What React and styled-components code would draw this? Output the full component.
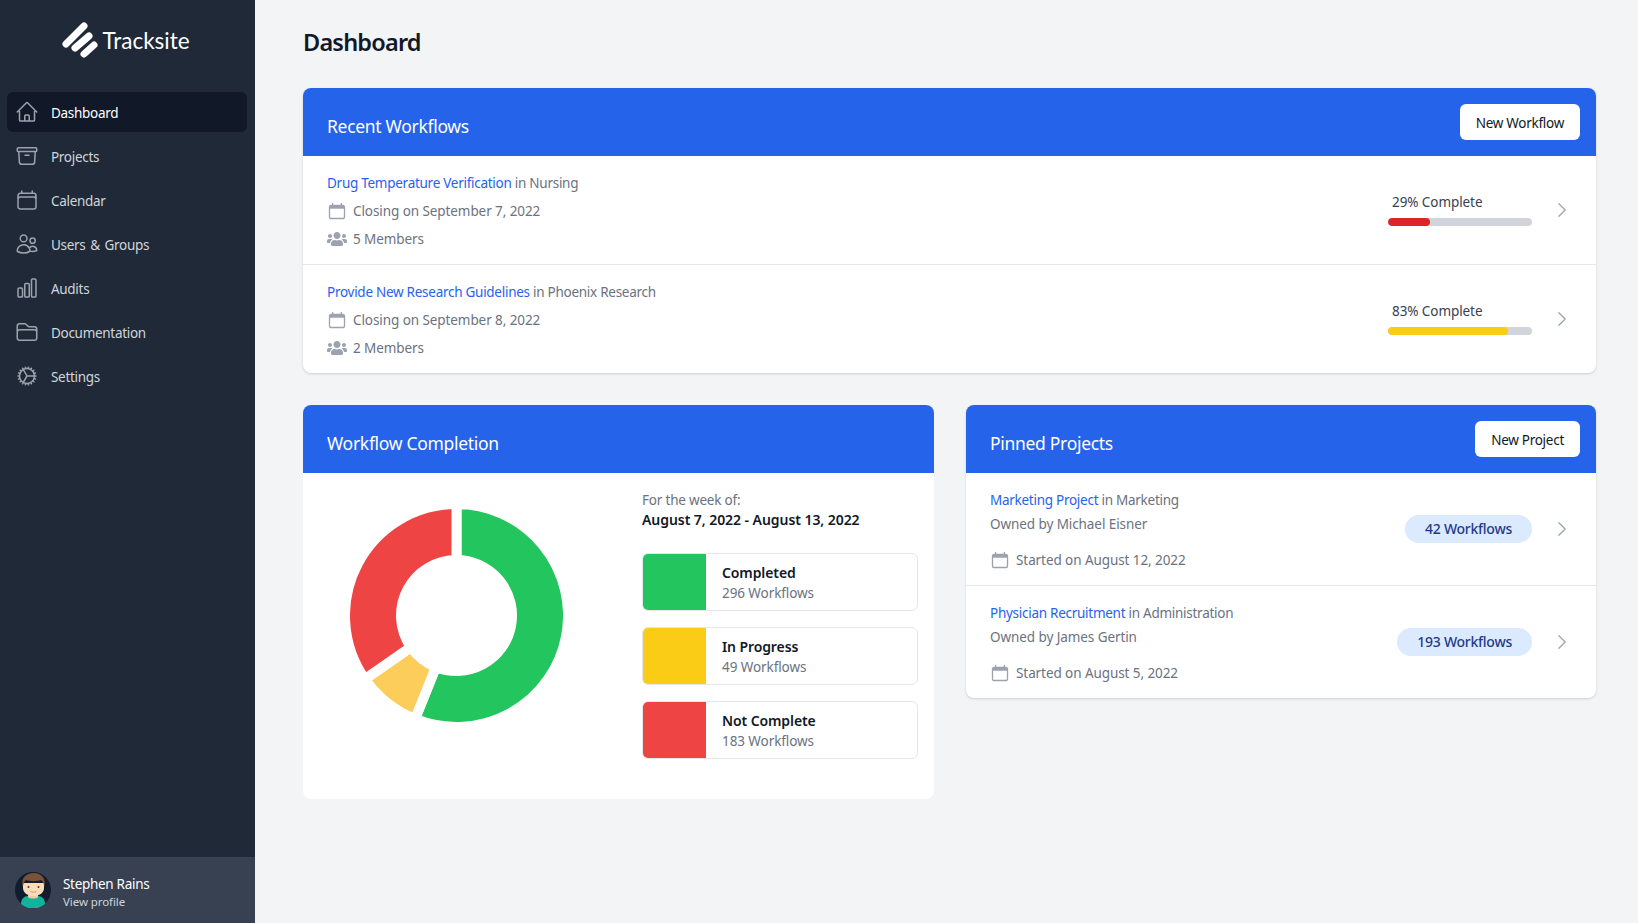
import React from 'react';
import styled, { createGlobalStyle } from 'styled-components';
import { FaUsers } from 'react-icons/fa';
import {
  HiOutlineHome,
  HiOutlineArchiveBox,
  HiOutlineCalendar,
  HiOutlineUsers,
  HiOutlineChartBar,
  HiOutlineFolder,
  HiOutlineCog,
  HiOutlineChevronRight,
} from 'react-icons/hi2';

const GlobalStyle = createGlobalStyle`
  html, body {
    margin: 0;
    height: 100%;
    background: #f3f4f6;
    font-family: "Noto Sans", "Open Sans", sans-serif;
    font-size: 13.5px;
    line-height: 20px;
    letter-spacing: -0.08px;
    color: #111827;
  }
  * { box-sizing: border-box; }
`;

const Shell = styled.div`
  display: flex;
  height: 100vh;
  overflow: hidden;
`;

const Sidebar = styled.aside`
  width: 255px;
  flex: none;
  display: flex;
  flex-direction: column;
  background: #1f2937;
`;

const Logo = styled.div`
  height: 80px;
  display: flex;
  align-items: center;
  justify-content: center;
  gap: 3px;
  color: #fff;
  padding-right: 4px;
`;

const LogoText = styled.span`
  font-family: "Lato", sans-serif;
  font-size: 22.5px;
  line-height: 30px;
  font-weight: 400;
  letter-spacing: 0;
  padding-top: 2px;
`;

const Nav = styled.nav`
  margin-top: 12px;
  padding: 0 8px 0 7px;
  display: flex;
  flex-direction: column;
  gap: 4px;
`;

const NavItem = styled.a`
  height: 40px;
  display: flex;
  align-items: center;
  gap: 12px;
  padding: 0 8px;
  border-radius: 6px;
  letter-spacing: -0.3px;
  word-spacing: 1.5px;
  background: ${(p) => (p.$active ? '#111827' : 'transparent')};
  color: ${(p) => (p.$active ? '#fff' : '#d1d5db')};
  svg {
    width: 24px;
    height: 24px;
    flex: none;
    color: #9ca3af;
  }
  span {
    padding-top: 2px;
  }
`;

const Profile = styled.div`
  margin-top: auto;
  height: 66px;
  background: #374151;
  display: flex;
  align-items: center;
  gap: 12px;
  padding: 0 15px;
`;

const ProfileText = styled.div`
  padding-top: 4px;
`;

const ProfileName = styled.div`
  color: #fff;
  letter-spacing: -0.3px;
`;

const ProfileLink = styled.div`
  color: #d1d5db;
  font-size: 11.5px;
  line-height: 16px;
`;

const Main = styled.main`
  flex: 1;
  min-width: 0;
  padding: 26px 42px 0 48px;
`;

const PageTitle = styled.h1`
  margin: 0 0 30px;
  font-size: 23.5px;
  line-height: 32px;
  font-weight: 600;
  letter-spacing: -0.8px;
  color: #111827;
`;

const Card = styled.section`
  background: #fff;
  border-radius: 8px;
  box-shadow: ${(p) => (p.$flat ? 'none' : '0 1px 3px rgba(0, 0, 0, 0.1), 0 1px 2px rgba(0, 0, 0, 0.06)')};
  overflow: hidden;
`;

const CardHeader = styled.header`
  height: 68px;
  background: #2563eb;
  display: flex;
  align-items: flex-end;
  justify-content: space-between;
  padding: 16px 16px 16px 24px;
`;

const CardTitle = styled.h2`
  margin: 0;
  font-size: 17.5px;
  line-height: 28px;
  font-weight: 400;
  letter-spacing: -0.3px;
  color: #fff;
`;

const HeaderButton = styled.button`
  height: 36px;
  padding: 2px 16px 0;
  border: 0;
  border-radius: 6px;
  background: #fff;
  font: inherit;
  letter-spacing: -0.27px;
  color: #111827;
`;

const Row = styled.div`
  display: flex;
  align-items: center;
  justify-content: space-between;
  padding: 17px 24px 15px;
  & + & {
    border-top: 1px solid #e5e7eb;
  }
`;

const RowInfo = styled.div`
  display: flex;
  flex-direction: column;
`;

const TitleLine = styled.div`
  color: #6b7280;
  letter-spacing: -0.27px;
  a {
    color: #2563eb;
  }
`;

const MetaLine = styled.div`
  display: flex;
  align-items: center;
  gap: 6px;
  margin-top: ${(p) => p.$top}px;
  color: #6b7280;
  > svg {
    width: 20px;
    height: 20px;
    flex: none;
    color: #9ca3af;
  }
`;

const RowSide = styled.div`
  display: flex;
  align-items: center;
  gap: 20px;
  margin-top: -2px;
`;

const Chevron = styled(HiOutlineChevronRight)`
  width: 20px;
  height: 20px;
  color: #9ca3af;
  flex: none;
`;

const Progress = styled.div`
  width: 144px;
  margin-top: -2px;
`;

const ProgressLabel = styled.div`
  padding-left: 4px;
  margin-bottom: 6px;
  color: #374151;
`;

const Track = styled.div`
  height: 8px;
  border-radius: 4px;
  background: #d1d5db;
  overflow: hidden;
`;

const Fill = styled.div`
  height: 100%;
  border-radius: 4px;
  background: ${(p) => p.$color};
`;

const Columns = styled.div`
  display: grid;
  grid-template-columns: 631px 630px;
  column-gap: 32px;
  margin-top: 32px;
  align-items: start;
`;

const CompletionBody = styled.div`
  height: 326px;
  display: flex;
  justify-content: space-between;
  padding: 17px 16px 0 47px;
`;

const Donut = styled.svg`
  width: 213px;
  height: 213px;
  margin-top: 19px;
  flex: none;
`;

const WeekLabel = styled.div`
  color: #6b7280;
  letter-spacing: -0.2px;
`;

const WeekRange = styled.div`
  font-size: 14px;
  font-weight: 600;
  color: #111827;
  letter-spacing: -0.06px;
`;

const Legend = styled.div`
  width: 276px;
`;

const LegendList = styled.div`
  margin-top: 23px;
  display: flex;
  flex-direction: column;
  gap: 16px;
`;

const LegendItem = styled.div`
  height: 58px;
  display: flex;
  border: 1px solid #e5e7eb;
  border-radius: 6px;
  overflow: hidden;
`;

const Swatch = styled.div`
  width: 64px;
  margin: -1px 0 -1px -1px;
  background: ${(p) => p.$color};
`;

const LegendText = styled.div`
  padding: 9px 16px;
  color: #6b7280;
  strong {
    display: block;
    font-size: 14px;
    font-weight: 600;
    letter-spacing: -0.1px;
    color: #111827;
  }
`;

const Pill = styled.span`
  height: 28px;
  display: inline-flex;
  align-items: center;
  padding: 0 20px;
  border-radius: 14px;
  background: #dbeafe;
  color: #1e3a8a;
  font-size: 14px;
  font-weight: 500;
  letter-spacing: -0.25px;
`;

const navItems = [
  { label: 'Dashboard', icon: HiOutlineHome, active: true },
  { label: 'Projects', icon: HiOutlineArchiveBox },
  { label: 'Calendar', icon: HiOutlineCalendar },
  { label: 'Users & Groups', icon: HiOutlineUsers },
  { label: 'Audits', icon: HiOutlineChartBar },
  { label: 'Documentation', icon: HiOutlineFolder },
  { label: 'Settings', icon: HiOutlineCog },
];

const workflows = [
  { name: 'Drug Temperature Verification', where: 'Nursing', closing: 'September 7, 2022', members: 5, pct: 29, color: '#dc2626' },
  { name: 'Provide New Research Guidelines', where: 'Phoenix Research', closing: 'September 8, 2022', members: 2, pct: 83, color: '#facc15' },
];

const projects = [
  { name: 'Marketing Project', where: 'Marketing', owner: 'Michael Eisner', started: 'August 12, 2022', count: 42 },
  { name: 'Physician Recruitment', where: 'Administration', owner: 'James Gertin', started: 'August 5, 2022', count: 193 },
];

const legend = [
  { label: 'Completed', count: 296, color: '#22c55e', slice: '#22c55e' },
  { label: 'In Progress', count: 49, color: '#facc15', slice: '#fccd5a' },
  { label: 'Not Complete', count: 183, color: '#ef4444', slice: '#ef4444' },
];

// doughnut slice, the white stroke makes the gaps so radii go a bit past the visible ring
function slicePath(from, to) {
  const R = 111.5;
  const r = 55.5;
  const pt = (rad, a) => {
    const t = (a * Math.PI) / 180;
    return `${(rad * Math.sin(t)).toFixed(2)} ${(-rad * Math.cos(t)).toFixed(2)}`;
  };
  const large = to - from > 180 ? 1 : 0;
  return `M${pt(R, from)}A${R} ${R} 0 ${large} 1 ${pt(R, to)}L${pt(r, to)}A${r} ${r} 0 ${large} 0 ${pt(r, from)}Z`;
}

function CompletionChart() {
  const total = legend.reduce((sum, l) => sum + l.count, 0);
  let angle = 0;
  return (
    <Donut viewBox="-106.5 -106.5 213 213">
      {legend.map((l) => {
        const from = angle;
        angle += (l.count / total) * 360;
        return <path key={l.label} d={slicePath(from, angle)} fill={l.slice} stroke="#fff" strokeWidth="10" />;
      })}
    </Donut>
  );
}

function LogoMark() {
  return (
    <svg width="38" height="38" viewBox="0 0 38 38" fill="none" stroke="#fff" strokeWidth="7" strokeLinecap="round">
      <path d="M5 23 23 5" />
      <path d="M14 27 28 15" />
      <path d="M23 33 33 24" />
    </svg>
  );
}

// calendar with the filled head band, as used in the list rows
function CalendarIcon() {
  return (
    <svg viewBox="0 0 24 24" fill="none" stroke="currentColor" strokeWidth="1.6" strokeLinecap="round">
      <path d="M6.75 3v3M17.25 3v3" />
      <rect x="3" y="5.25" width="18" height="15.75" rx="2.25" />
      <path d="M3.6 6h16.8v3.4H3.6z" fill="currentColor" stroke="none" />
    </svg>
  );
}

function Avatar() {
  return (
    <svg width="36" height="36" viewBox="0 0 36 36" style={{ flex: 'none' }}>
      <circle cx="18" cy="18" r="18" fill="#111c2e" />
      <path d="M6 32c0-5 3-8 7-8h10c4 0 7 3 7 8a18 18 0 0 1-24 0z" fill="#10b39b" />
      <path d="M13 20h10v5c-1 2-9 2-10 0z" fill="#f4c9a2" />
      <path d="M8 11h21v5c0 5-5 8-10.500 8S8 21 8 16z" fill="#fcdcb8" />
      <path d="M7.500 14C6 6 11 1 19 1c7 0 12 5 10.500 13-1-3-2-5-3.500-6-4 1.500-11 1.500-15 0-1.500 1-2.500 3-3 6z" fill="#7b5238" />
      <circle cx="13.500" cy="15" r="1" fill="#5b3a28" />
      <circle cx="23.500" cy="15" r="1" fill="#5b3a28" />
      <path d="M15.500 19.500c2 1 4 1 6 0" stroke="#d99b78" strokeWidth="1" fill="none" />
    </svg>
  );
}

export default function App() {
  return (
    <>
      <GlobalStyle />
      <Shell>
        <Sidebar>
          <Logo>
            <LogoMark />
            <LogoText>Tracksite</LogoText>
          </Logo>
          <Nav>
            {navItems.map(({ label, icon: Icon, active }) => (
              <NavItem key={label} $active={active}>
                <Icon />
                <span>{label}</span>
              </NavItem>
            ))}
          </Nav>
          <Profile>
            <Avatar />
            <ProfileText>
              <ProfileName>Stephen Rains</ProfileName>
              <ProfileLink>View profile</ProfileLink>
            </ProfileText>
          </Profile>
        </Sidebar>
        <Main>
          <PageTitle>Dashboard</PageTitle>
          <Card>
            <CardHeader>
              <CardTitle>Recent Workflows</CardTitle>
              <HeaderButton>New Workflow</HeaderButton>
            </CardHeader>
            {workflows.map((w) => (
              <Row key={w.name}>
                <RowInfo>
                  <TitleLine>
                    <a>{w.name}</a> in {w.where}
                  </TitleLine>
                  <MetaLine $top={8}>
                    <CalendarIcon />
                    Closing on {w.closing}
                  </MetaLine>
                  <MetaLine $top={8}>
                    <FaUsers />
                    {w.members} Members
                  </MetaLine>
                </RowInfo>
                <RowSide>
                  <Progress>
                    <ProgressLabel>{w.pct}% Complete</ProgressLabel>
                    <Track>
                      <Fill $color={w.color} style={{ width: `${w.pct}%` }} />
                    </Track>
                  </Progress>
                  <Chevron />
                </RowSide>
              </Row>
            ))}
          </Card>
          <Columns>
            <Card $flat>
              <CardHeader>
                <CardTitle>Workflow Completion</CardTitle>
              </CardHeader>
              <CompletionBody>
                <CompletionChart />
                <Legend>
                  <WeekLabel>For the week of:</WeekLabel>
                  <WeekRange>August 7, 2022 - August 13, 2022</WeekRange>
                  <LegendList>
                    {legend.map((l) => (
                      <LegendItem key={l.label}>
                        <Swatch $color={l.color} />
                        <LegendText>
                          <strong>{l.label}</strong>
                          {l.count} Workflows
                        </LegendText>
                      </LegendItem>
                    ))}
                  </LegendList>
                </Legend>
              </CompletionBody>
            </Card>
            <Card>
              <CardHeader>
                <CardTitle>Pinned Projects</CardTitle>
                <HeaderButton>New Project</HeaderButton>
              </CardHeader>
              {projects.map((p) => (
                <Row key={p.name}>
                  <RowInfo>
                    <TitleLine>
                      <a>{p.name}</a> in {p.where}
                    </TitleLine>
                    <MetaLine $top={4}>Owned by {p.owner}</MetaLine>
                    <MetaLine $top={16}>
                      <CalendarIcon />
                      Started on {p.started}
                    </MetaLine>
                  </RowInfo>
                  <RowSide>
                    <Pill>{p.count} Workflows</Pill>
                    <Chevron />
                  </RowSide>
                </Row>
              ))}
            </Card>
          </Columns>
        </Main>
      </Shell>
    </>
  );
}
